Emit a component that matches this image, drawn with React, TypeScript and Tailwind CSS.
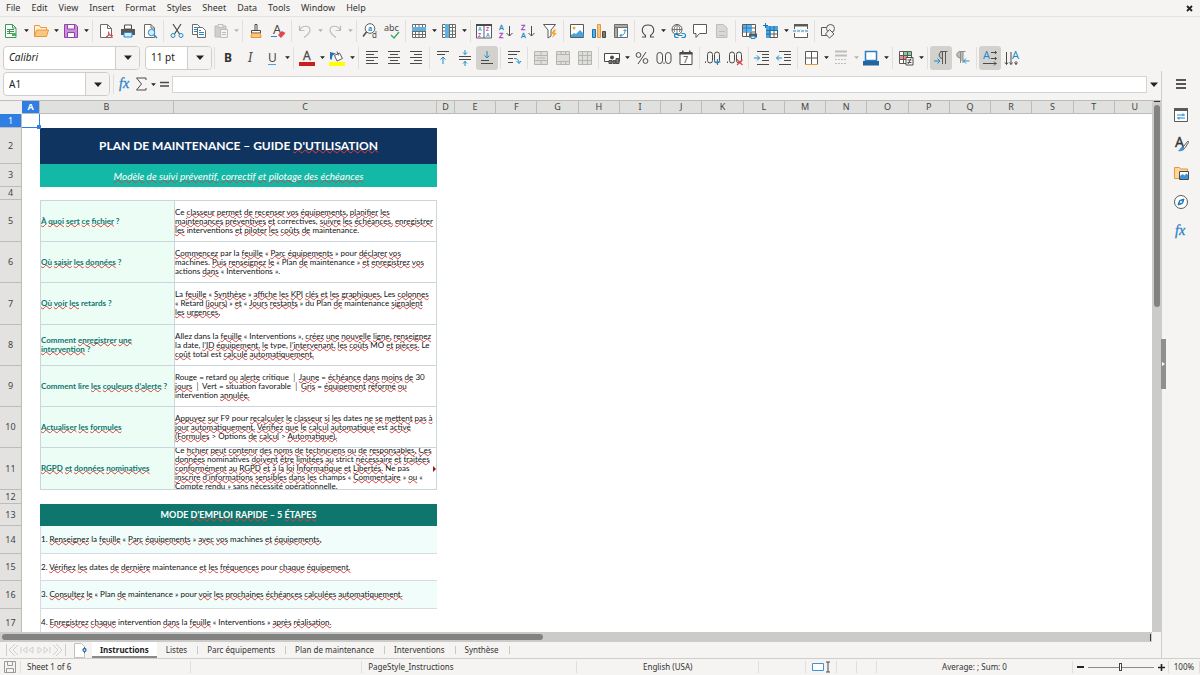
import React from 'react'

// ---------- icons (16x16) ----------

const INK = '#4a4a48'
const BLUE = '#1e8bcd'
const GREY = '#bdbdba'
const PURPLE = '#a13cc0'

const icons: Record<string, React.ReactNode> = {
  newDoc: (
    <>
      <path d="M2.5 1.5h7l3.5 3.5v9.500h-10.500z" fill="#fff" stroke="#3a9a55" />
      <path d="M9.500 1.500v3.500h3.500" fill="none" stroke="#3a9a55" />
      <path d="M4 6.500h7M4 8.500h7M4 10.500h7M6.500 6v5" stroke="#3a9a55" />
      <path d="M9 10h4v3h-4z" fill="#4caf63" />
    </>
  ),
  open: (
    <>
      <path d="M1.500 13.500v-11h5l1 2h6v3" fill="#fff3df" stroke="#e8973a" />
      <path d="M1.500 13.500l2-6.500h12l-2 6.500z" fill="#fbc77d" stroke="#e8973a" />
    </>
  ),
  save: (
    <>
      <path d="M1.500 1.500h11l2 2v11h-13z" fill="#c98fdc" stroke="#9440ab" />
      <path d="M4.500 1.500h7v4.500h-7z" fill="#fff" stroke="#9440ab" />
      <path d="M4.500 9.500h7v5h-7z" fill="#fff" stroke="#9440ab" />
    </>
  ),
  pdf: (
    <>
      <path d="M2.500 1.500h7l4 4v9h-11z" fill="#fff" stroke="#6b6b69" />
      <path d="M9.500 1.500v4h4" fill="none" stroke="#6b6b69" />
      <path d="M8 15c2-1 3-4 2.500-6.500M8 14c2-2 5-2.500 7-1.500M10.500 9c.5 2.500 2.500 4.500 4.500 5.500" fill="none" stroke="#e0434b" />
    </>
  ),
  print: (
    <>
      <path d="M4.500 2h7v4h-7z" fill="#fff" stroke={INK} />
      <path d="M1 6h14v6h-14z" fill="#54585c" />
      <path d="M4 9.500h8v4.500h-8z" fill="#d7ecfa" stroke={BLUE} />
    </>
  ),
  preview: (
    <>
      <path d="M2.500 1.500h6.500l3.500 3.500v9.500h-10z" fill="#fff" stroke="#6b6b69" />
      <path d="M9 1.500v3.500h3.500" fill="none" stroke="#6b6b69" />
      <circle cx="9.500" cy="9.500" r="3.200" fill="#d7ecfa" stroke={BLUE} />
      <path d="M12 12l3 3" stroke={BLUE} strokeWidth="1.500" />
    </>
  ),
  cut: (
    <>
      <path d="M4 1l6.500 10M12 1L5.500 11" stroke={INK} strokeWidth="1.200" />
      <circle cx="4" cy="12.500" r="2" fill="none" stroke={BLUE} />
      <circle cx="12" cy="12.500" r="2" fill="none" stroke={BLUE} />
    </>
  ),
  copy: (
    <>
      <path d="M1.500 1.500h5l2 2v8h-7z" fill="#fff" stroke="#6b6b69" />
      <path d="M3 4.500h3M3 6.500h3M3 8.500h3" stroke={BLUE} />
      <path d="M6.500 4.500h5l3 3v7h-8z" fill="#fff" stroke="#6b6b69" />
      <path d="M8 9.500h5M8 11.500h5M8 7.500h2" stroke={BLUE} />
    </>
  ),
  paste: (
    <>
      <path d="M2 3h11v11h-11z" fill="#cfcfcc" stroke={GREY} />
      <path d="M5 1.500h5v3h-5z" fill="#eee" stroke={GREY} />
      <path d="M7.500 6.500h7v8h-7z" fill="#f3f3f1" stroke={GREY} />
      <path d="M9 9.500h4M9 11.500h4" stroke={GREY} />
    </>
  ),
  brush: (
    <>
      <path d="M7 1.500h2v6h-2z" fill="#fff" stroke={INK} />
      <path d="M3.500 7.500h9v2.500h-9z" fill="#fff" stroke={INK} />
      <path d="M3.500 10.500h9l.5 4h-10z" fill="#fbc77d" stroke="#e8973a" />
    </>
  ),
  clear: (
    <>
      <text x="3" y="11" fontSize="13" fill={INK}>A</text>
      <path d="M1 13.500h6" stroke={BLUE} />
      <path d="M8 12l4-4 3.500 2-4.500 5z" fill="#e54550" />
    </>
  ),
  undo: <path d="M2.500 2.500v5h5M3 7c2-5 10-5 10 0 0 3.500-3 5-6 7.500" fill="none" stroke={GREY} strokeWidth="1.200" />,
  redo: <path d="M13.500 2.500v5h-5M13 7c-2-5-10-5-10 0 0 3.500 3 5 6 7.500" fill="none" stroke={GREY} strokeWidth="1.200" />,
  find: (
    <>
      <circle cx="8" cy="5.500" r="4.800" fill="#fff" stroke="#5a5a58" />
      <path d="M4.500 9L1 13.500" stroke={INK} strokeWidth="1.500" />
      <text x="6" y="8" fontSize="7" fontWeight="bold" fill={BLUE}>a</text>
      <text x="10" y="15" fontSize="8" fill={INK}>d</text>
    </>
  ),
  spell: (
    <>
      <text x="0" y="8" fontSize="9" fill={INK}>abc</text>
      <path d="M7 12l3 3 5-6" fill="none" stroke="#35a860" strokeWidth="1.300" />
    </>
  ),
  rows: (
    <>
      <path d="M1.500 1.500h13v13h-13zM1.500 8.500h13M1.500 11.500h13M4.500 1.500v13M8 1.500v13M11.500 1.500v13" fill="#fff" stroke="#6b6b69" />
      <path d="M1 4h14v4h-14z" fill="#5fb0e5" />
    </>
  ),
  cols: (
    <>
      <path d="M1.500 1.500h13v13h-13zM1.500 4.500h13M1.500 8h13M1.500 11.500h13M8.500 1.500v13M11.500 1.500v13" fill="#fff" stroke="#6b6b69" />
      <path d="M4 1h4v14h-4z" fill="#5fb0e5" />
    </>
  ),
  sort: (
    <>
      <path d="M.5 1.500h15v13.500h-15zM8 1v14" fill="#fff" stroke="#5a5a58" />
      <path d="M0 1h16v2h-16z" fill="#4a4a48" />
      <g fontSize="5" fontWeight="bold" fontFamily="Liberation Sans, sans-serif">
        <text x="2" y="8" fill={BLUE}>A</text>
        <text x="2" y="14" fill={PURPLE}>Z</text>
        <text x="10" y="8" fill={PURPLE}>Z</text>
        <text x="10" y="14" fill={BLUE}>A</text>
      </g>
    </>
  ),
  sortAsc: (
    <>
      <g fontSize="7" fontFamily="Liberation Sans, sans-serif">
        <text x="1" y="7" fill={BLUE} stroke={BLUE} strokeWidth=".3">A</text>
        <text x="1" y="15" fill={PURPLE} stroke={PURPLE} strokeWidth=".3">Z</text>
      </g>
      <path d="M11.500 3v10M8.500 10l3 3 3-3" fill="none" stroke={INK} />
    </>
  ),
  sortDesc: (
    <>
      <g fontSize="7" fontFamily="Liberation Sans, sans-serif">
        <text x="1" y="7" fill={PURPLE} stroke={PURPLE} strokeWidth=".3">Z</text>
        <text x="1" y="15" fill={BLUE} stroke={BLUE} strokeWidth=".3">A</text>
      </g>
      <path d="M11.500 3v10M8.500 10l3 3 3-3" fill="none" stroke={INK} />
    </>
  ),
  filter: (
    <>
      <path d="M1.500 1.500h12l-4.500 5.500v6l-3 2v-8z" fill="#fff" stroke="#5a5a58" />
      <path d="M12 6.500l-3 4.500h2.500l-1.500 4 5-5h-2.500l1.500-3.500z" fill="#f7a733" />
    </>
  ),
  image: (
    <>
      <path d="M1.500 1.500h13v13h-13z" fill="#fff" stroke="#5a5a58" />
      <circle cx="5" cy="5" r="1.500" fill="#f7a733" />
      <path d="M2 14v-2l3-2 2 1 4-4 3.500 3.500v3.500z" fill="#4aa3dd" />
    </>
  ),
  chart: (
    <>
      <path d="M1.500 6.500h3v8h-3z" fill="#5fb0e5" stroke="#1873b0" />
      <path d="M6.500 1.500h3v13h-3z" fill="#fbc77d" stroke="#e8973a" />
      <path d="M11.500 8.500h3v6h-3z" fill="#77797c" stroke="#4b4b49" />
    </>
  ),
  pivot: (
    <>
      <path d="M1.500 1.500h13v13h-13zM1.500 4.500h13M4.500 1.500v13" fill="#fff" stroke="#6b6b69" />
      <path d="M2 2h12v2h-12zM2 5h2v9h-2z" fill="#aaa" />
      <path d="M7 12.500c4 0 5-2 5-5.500M10.500 8l1.500-1.500 1.500 1.500M8.500 11l-1.500 1.500 1.500 1.500" fill="none" stroke={BLUE} />
    </>
  ),
  omega: <path d="M2 14h3.500v-1.500C.5 9 1.500 2 8 2s7.500 7 2.500 10.500v1.500h3.500" fill="none" stroke={INK} strokeWidth="1.100" />,
  link: (
    <>
      <circle cx="7" cy="6.500" r="5" fill="#fff" stroke="#5a5a58" />
      <path d="M2 6.500h10M7 1.500v10M4.500 9c-1-3 0-6 2.500-7.500 2.500 1.500 3.500 4.500 2.500 7.500" fill="none" stroke="#5a5a58" strokeWidth=".8" />
      <path d="M8.500 10.500h-2a2 2 0 000 4h2M11.500 10.500h2a2 2 0 010 4h-2M7.500 12.500h5" fill="none" stroke={BLUE} strokeWidth="1.200" />
    </>
  ),
  comment: <path d="M1.500 1.500h13v9h-7l-3.500 4v-4h-2.500z" fill="#fff" stroke="#5a5a58" />,
  headers: (
    <>
      <path d="M2.500 1.500h7l3.500 3.500v9.500h-10.500z" fill="#d8d8d5" stroke={GREY} />
      <path d="M5 8.500h6M5 12.500h6" stroke="#bbb" />
    </>
  ),
  printArea: (
    <>
      <path d="M1.500 1.500h13v12h-13zM1.500 5h13M1.500 9h13M5.500 1.500v12M10 1.500v12" fill="#fff" stroke="#5a5a58" />
      <path d="M2 2h9v7h-9z" fill="#5fb0e5" />
      <path d="M2 5h9M5.500 2v7" stroke="#2b7fc0" />
      <path d="M8 10.500h8v4h-8z" fill="#54585c" />
      <path d="M10 13h4v2.500h-4z" fill="#d7ecfa" stroke={BLUE} />
    </>
  ),
  freeze: (
    <>
      <path d="M3.500 3.500h11v11h-11zM3.500 7.500h11M3.500 11h11M7 3.500v11M11 3.500v11" fill="#fff" stroke="#5a5a58" />
      <path d="M3 3h12v4h-12zM3 3h4v12h-4z" fill="#4aa3dd" />
      <path d="M3 7.500h12M3 11h4M7 3v12M11 3v4" stroke="#1873b0" />
      <path d="M2.500 0v5M0 2.500h5" stroke="#1873b0" />
    </>
  ),
  split: (
    <>
      <path d="M1.500 6v-4.500h13v4.500M1.500 10v4.500h13v-4.500" fill="#fff" stroke="#5a5a58" />
      <path d="M1 1h14v2.500h-14z" fill="#5a5a58" />
      <path d="M0 8h16" stroke={BLUE} strokeDasharray="3 1" />
    </>
  ),
  shapes: (
    <>
      <path d="M1.500 4.500h7v8h-7z" fill="#f5f4f2" stroke="#5a5a58" />
      <circle cx="10.500" cy="5.500" r="4" fill="#f5f4f2" stroke="#5a5a58" />
      <path d="M9.500 6.500l4.500 4.500-4.500 4-4-4z" fill="#f5f4f2" stroke="#5a5a58" />
    </>
  ),
  bold: <text x="4" y="12" fontSize="12" fontWeight="bold" fill="#333">B</text>,
  italic: <text x="6" y="12" fontSize="12" fontStyle="italic" fontFamily="DejaVu Serif, serif" fill={INK}>I</text>,
  underline: (
    <>
      <text x="4" y="12" fontSize="12" fill={INK}>U</text>
      <path d="M4 14.500h8" stroke="#4aa3dd" />
    </>
  ),
  fontColor: (
    <>
      <text x="4" y="10" fontSize="12" fill={INK} stroke={INK} strokeWidth=".3">A</text>
      <path d="M0 12h16v4h-16z" fill="#c8201f" />
    </>
  ),
  fillColor: (
    <>
      <path d="M5.500 5.500l5-2.500 3 5.500-5.500 2.500zM8 1.500l1.500 4" fill="#fff" stroke="#5a5a58" />
      <path d="M1 2l6 1.500-3.500 2-1 4.500-1.500-1z" fill="#2272b4" />
      <path d="M0 12h16v4h-16z" fill="#ff0" />
    </>
  ),
  alignLeft: <path d="M2 1.500h12M2 4.500h8M2 7.500h12M2 10.500h8M2 13.500h12" stroke={INK} />,
  alignCenter: <path d="M2 1.500h12M4 4.500h8M2 7.500h12M4 10.500h8M2 13.500h12" stroke={INK} />,
  alignRight: <path d="M2 1.500h12M6 4.500h8M2 7.500h12M6 10.500h8M2 13.500h12" stroke={INK} />,
  alignTop: (
    <>
      <path d="M2 1.500h12M2 4.500h8" stroke={INK} />
      <path d="M8 14v-7M5.500 9.500L8 7l2.500 2.500" fill="none" stroke={BLUE} />
    </>
  ),
  alignMiddle: (
    <>
      <path d="M2 6.500h12M2 9.500h12" stroke={INK} />
      <path d="M8 0v4.500M6 2.500l2 2 2-2M8 16v-5M6 13.500l2-2 2 2" fill="none" stroke={BLUE} />
    </>
  ),
  alignBottom: (
    <>
      <path d="M2 10.500h8M2 13.500h12" stroke={INK} />
      <path d="M8 1v7M5.500 5.500L8 8l2.500-2.500" fill="none" stroke={BLUE} />
    </>
  ),
  wrap: (
    <>
      <path d="M2 1.500h12M2 4.500h9M2 8.500h5M2 12.500h5" stroke={INK} />
      <path d="M8 8.500c3 0 5 1 5 4.500M10.500 11l2.500 2.500 2-2.500" fill="none" stroke={BLUE} />
    </>
  ),
  merge: <path d="M1.500 1.500h13v13h-13zM1.500 5.500h13M1.500 10.500h13M8 1.500v4M8 10.500v4M4 8h8" fill="#dededb" stroke="#b4b4b1" />,
  mergeCells: <path d="M1.500 1.500h13v13h-13zM1.500 4.500h13M1.500 11.500h13M6 1.500v3M10.500 1.500v3M6 11.500v3M10.500 11.500v3" fill="#dededb" stroke="#b4b4b1" />,
  unmerge: <path d="M1.500 1.500h13v13h-13zM1.500 5.500h13M1.500 10.500h13M5.500 1.500v13M10.500 1.500v13" fill="#dededb" stroke="#b4b4b1" />,
  currency: (
    <>
      <path d="M.5 3.500h15v8h-15z" fill="#fff" stroke={INK} />
      <circle cx="8" cy="7.500" r="2" fill={INK} />
      <path d="M5 13.500h3v-3h-3zM9 13.500h2.500v-3h-2.500zM12 13.500h3v-5h-3z" fill="#77797c" stroke={INK} />
    </>
  ),
  percent: (
    <>
      <circle cx="4.500" cy="5" r="2.400" fill="none" stroke={INK} />
      <circle cx="11.500" cy="11" r="2.400" fill="none" stroke={INK} />
      <path d="M12 2L4 14" stroke={INK} />
    </>
  ),
  number: (
    <>
      <rect x="1" y="2.500" width="5.500" height="11" rx="2.700" fill="none" stroke={INK} />
      <rect x="9.500" y="2.500" width="5.500" height="11" rx="2.700" fill="none" stroke={INK} />
      <path d="M7.500 12.500h1v1.500h-1z" fill={INK} />
    </>
  ),
  date: (
    <>
      <path d="M2 3h12v11.500h-12z" fill="#fff" stroke={INK} />
      <path d="M1.500 2h13v2.500h-13zM4 .5h1.500v2h-1.500zM11 .5h1.500v2h-1.500z" fill={INK} />
      <text x="5" y="13" fontSize="9" fill={INK}>7</text>
    </>
  ),
  addDecimal: (
    <>
      <path d="M0 11.500h1v1.500h-1z" fill={INK} />
      <rect x="2.500" y="2" width="5" height="11" rx="2.500" fill="none" stroke={INK} />
      <rect x="9.500" y="2" width="5" height="11" rx="2.500" fill="none" stroke={INK} />
      <path d="M12.500 9v6M9.500 12h6" stroke={BLUE} strokeWidth="1.200" />
    </>
  ),
  delDecimal: (
    <>
      <path d="M0 11.500h1v1.500h-1z" fill={INK} />
      <rect x="2.500" y="2" width="5" height="11" rx="2.500" fill="none" stroke={INK} />
      <rect x="9.500" y="2" width="5" height="11" rx="2.500" fill="none" stroke={INK} />
      <path d="M10 9.500l5.500 5.500M15.500 9.500L10 15" stroke="#e0434b" strokeWidth="1.200" />
    </>
  ),
  indent: (
    <>
      <path d="M3 1.500h12M8 4.500h7M8 7.500h7M8 10.500h7M3 14.500h12" stroke={INK} />
      <path d="M0 8h5.500M3 5.500L5.500 8 3 10.500" fill="none" stroke={BLUE} />
    </>
  ),
  outdent: (
    <>
      <path d="M3 1.500h12M8 4.500h7M8 7.500h7M8 10.500h7M3 14.500h12" stroke={INK} />
      <path d="M.5 8h5.500M3 5.500L.5 8 3 10.500" fill="none" stroke={BLUE} />
    </>
  ),
  borders: (
    <>
      <path d="M2.500 14.500v-13h12v13M8.500 1.500v13M2.500 8h12" fill="#fff" stroke="#5a5a58" />
      <path d="M2 14.500h13" stroke="#e8973a" />
    </>
  ),
  borderStyle: (
    <>
      <path d="M2 1.500h12M2 5.500h12" stroke={GREY} strokeWidth="2" />
      <path d="M2 9.500h12M2 13.500h12" stroke={GREY} strokeDasharray="2 1" />
    </>
  ),
  borderColor: (
    <>
      <path d="M2.500 1.500h11v9h-11z" fill="#fff" stroke="#2b7fc0" strokeWidth="1.500" />
      <path d="M0 11h16v4.500h-16z" fill="#24659f" />
    </>
  ),
  conditional: (
    <>
      <path d="M1.500 1.500h12v12h-12z" fill="#fff" stroke="#5a5a58" />
      <path d="M6 2h7v3h-7z" fill="#7fcf95" />
      <path d="M2 6h7v3h-7z" fill="#ee8b8f" />
      <path d="M1.500 5.500h12M1.500 9.500h12M5.500 1.500v12M9.500 1.500v12" stroke="#5a5a58" />
      <path d="M8 7.500h7v7.500h-7z" fill="#fff" stroke={INK} />
      <path d="M9.500 10h4M9.500 12.500h4M13 8.500l-3 5.500" stroke={INK} />
    </>
  ),
  ltr: (
    <>
      <path d="M9.500 8.500c-4.500 0-4.500-6.500 0-6.500z" fill="#bdbdba" />
      <path d="M9.500 14v-12M7.500 1.500h7M12.500 2v12M9.500 8.500c-4.500 0-4.500-7 0-7" fill="none" stroke="#5a5a58" />
      <path d="M1 11h6M4.500 8.500L7 11l-2.500 2.500" fill="none" stroke={BLUE} />
    </>
  ),
  rtl: (
    <>
      <path d="M5.500 8c-5 0-5-6 0-6h2.500v9h-2.500z" fill="#bdbdba" />
      <path d="M5.500 13v-11.500h5M8 2v11M5.500 8c-5 0-5-6.500 0-6.500" fill="none" stroke="#8b8b89" />
      <path d="M8.500 11h6M11 8.500L8.500 11l2.500 2.500" fill="none" stroke={BLUE} />
    </>
  ),
  textLtr: (
    <>
      <text x="1" y="9" fontSize="11" fill={BLUE}>A</text>
      <path d="M9 2.500h5.500M13 1l1.500 1.500L13 4M9 8.500h5.500M13 7l1.500 1.500L13 10M1 13.500h13.500M12 11.500l2 2-2 2" fill="none" stroke={INK} />
    </>
  ),
  textTtb: (
    <>
      <text x="8" y="9" fontSize="11" fill={BLUE}>A</text>
      <path d="M2.500 2v12.500M1 12.500l1.500 2 1.500-2M7 2v12.500M5.500 12.500l1.500 2 1.500-2M12 11v3.500M10.500 12.500l1.500 2 1.500-2" fill="none" stroke={INK} />
    </>
  ),
  fx: (
    <text x="2" y="12" fontSize="14" fontStyle="italic" fontFamily="Liberation Serif, serif" fill="#2b82c9" stroke="#2b82c9" strokeWidth=".3">
      fx
    </text>
  ),
  sigma: <path d="M13 4v-2h-9.500l5 6-5 6h9.500v-2" fill="none" stroke={INK} />,
  equals: <path d="M4 6.500h9M4 10h9" stroke={INK} strokeWidth="1.500" />,
  hamburger: <path d="M3 4h10M3 8h10M3 12h10" stroke="#222" strokeWidth="1.400" />,
  properties: (
    <>
      <path d="M1.500 1.500h13v13h-13z" fill="#fff" stroke="#5a5a58" />
      <path d="M1 1h14v3h-14z" fill="#5a5a58" />
      <path d="M4 8h8M4 11h8M10 6.500V9M6 10v2.500" stroke={BLUE} />
    </>
  ),
  styles: (
    <>
      <text x="2" y="11" fontSize="14" fill="#333" stroke="#333" strokeWidth=".3">A</text>
      <path d="M15 5l-5 6 1.500 1.500 4-6z" fill="#fff" stroke="#5a5a58" />
      <path d="M10 11c-2-1-2.500 2.500-5 4 3 .5 6 0 6.500-2.500z" fill="#3d93d3" />
    </>
  ),
  gallery: (
    <>
      <path d="M1.500 13.500v-11h5l1 1.500h7v9.500z" fill="#fbd7a0" stroke="#e8973a" />
      <path d="M6.500 6.500h9v8h-9z" fill="#fff" stroke="#4b4b49" />
      <path d="M7 14v-3l2.500-2 2 1.500 2-2 1.500 1.500v4z" fill="#3d93d3" />
    </>
  ),
  navigator: (
    <>
      <circle cx="8" cy="8" r="6.500" fill="#fff" stroke="#5a5a58" />
      <path d="M11 5l-1.500 4.500-4.500 1.500 1.500-4.500z" fill="#3d93d3" stroke="#1873b0" />
      <circle cx="8" cy="8" r="1" fill="#fff" />
    </>
  ),
  disk: <path d="M2.500 2.500h11v11h-11zM5.500 2.500v4h5v-4M4.500 13.500v-4h7v4" fill="none" stroke="#9a9a97" />,
  sheetAdd: (
    <>
      <path d="M1.500 1.500h7l3 3v11h-10z" fill="#fff" stroke="#c0c0bd" />
      <circle cx="11.500" cy="8" r="1.500" fill="#fff" stroke="#2b6cb0" strokeWidth="1.300" />
      <path d="M11.500 5v1M11.500 10v1" stroke="#2b6cb0" />
    </>
  ),
}

const Icon = ({ name }: { name: string }) => (
  <svg width="16" height="16" viewBox="0 0 16 16" aria-hidden="true" className="shrink-0 overflow-visible">
    {icons[name]}
  </svg>
)

const Caret = ({ big = false, dim = false }: { big?: boolean; dim?: boolean }) => (
  <svg width={big ? 8 : 5} height={big ? 5 : 3} viewBox="0 0 8 5" aria-hidden="true">
    <path d="M0 .5h8L4 5z" fill={dim ? '#b4b4b1' : '#222'} />
  </svg>
)

// ---------- toolbars ----------

// '|' is a separator; after the name 'v' adds a drop-down arrow, '!' marks a pressed button, '-' a disabled arrow
const standardBar =
  'newDoc:v open:v save:v | pdf print preview | cut copy paste:v- | brush clear | undo:v- redo:v- | find spell | rows:v cols:v | sort sortAsc sortDesc filter | image chart pivot | omega:v link comment headers | printArea freeze:v split | shapes'

const formattingBar =
  '| bold italic underline:v | fontColor:v fillColor:v | alignLeft alignCenter alignRight | alignTop alignMiddle alignBottom:! | wrap | merge mergeCells unmerge | currency:v percent number date | addDecimal delDecimal | indent outdent | borders:v borderStyle:v- borderColor:v | conditional:v | ltr:! rtl | textLtr:! textTtb'

const ToolButtons = ({ spec }: { spec: string }) => (
  <>
    {spec.split(' ').map((item, i) => {
      if (item === '|') return <span key={i} className="mx-[2px] h-[22px] w-px shrink-0 bg-[#e0dfdc]" />
      const [name, flags = ''] = item.split(':')
      return (
        <React.Fragment key={i}>
          <button
            aria-label={name}
            className={`flex h-[24px] w-[22px] shrink-0 items-center justify-center rounded-[3px] ${flags.includes('!') ? 'bg-[#d3d1cd]' : ''}`}
          >
            <Icon name={name} />
          </button>
          {flags.includes('v') && (
            <button aria-label={`${name} options`} className="flex h-[24px] w-[8px] shrink-0 items-center justify-center">
              <Caret dim={flags.includes('-')} />
            </button>
          )}
        </React.Fragment>
      )
    })}
  </>
)

type ComboProps = { label: string; value: string; className: string; italic?: boolean }

const Combo = ({ label, value, className, italic }: ComboProps) => (
  <div className={`flex h-[24px] shrink-0 overflow-hidden rounded-[4px] border border-[#cfcdc9] bg-white ${className}`}>
    <input
      aria-label={label}
      defaultValue={value}
      className={`w-0 min-w-0 flex-1 pl-[5px] text-[10px] text-[#222] outline-none ${italic ? 'italic' : ''}`}
    />
    <button aria-label={`${label} list`} className="flex w-[24px] items-center justify-center border-l border-[#cfcdc9] bg-[#f5f4f2]">
      <Caret big />
    </button>
  </div>
)

// ---------- sheet ----------

const columns = 'ABCDEFGHIJKLMNOPQRSTU'.split('')

type Row = {
  h: string
  kind?: 'title' | 'subtitle' | 'section' | 'qa' | 'step'
  tint?: boolean
  first?: boolean
  overflow?: boolean
  label?: string[]
  lines?: string[]
}

// a word that starts with ~ is unknown to the spell checker
const rows: Row[] = [
  { h: 'h-[14px]' },
  { h: 'h-[36px]', kind: 'title', lines: ["PLAN DE MAINTENANCE – GUIDE ~D'UTILISATION"] },
  { h: 'h-[23px]', kind: 'subtitle', lines: ['~Modèle ~de ~suivi ~préventif, ~correctif ~et ~pilotage ~des ~échéances'] },
  { h: 'h-[13px]' },
  {
    h: 'h-[42px]',
    kind: 'qa',
    first: true,
    label: ['~À ~quoi ~sert ~ce ~fichier ?'],
    lines: [
      'Ce ~classeur ~permet ~de ~recenser ~vos ~équipements, ~planifier ~les',
      '~maintenances ~préventives ~et correctives, ~suivre ~les ~échéances, ~enregistrer',
      '~les interventions ~et ~piloter ~les ~coûts ~de maintenance.',
    ],
  },
  {
    h: 'h-[41px]',
    kind: 'qa',
    label: ['~Où ~saisir ~les ~données ?'],
    lines: [
      '~Commencez par la ~feuille « ~Parc ~équipements » pour ~déclarer ~vos',
      'machines. ~Puis ~renseignez ~le « Plan ~de maintenance » ~et ~enregistrez ~vos',
      'actions ~dans « Interventions ».',
    ],
  },
  {
    h: 'h-[42px]',
    kind: 'qa',
    label: ['~Où ~voir ~les retards ?'],
    lines: [
      'La ~feuille « ~Synthèse » ~affiche ~les ~KPI ~clés ~et ~les ~graphiques. Les ~colonnes',
      '« Retard ~(jours) » ~et « ~Jours ~restants » du Plan ~de maintenance ~signalent',
      '~les ~urgences.',
    ],
  },
  {
    h: 'h-[41px]',
    kind: 'qa',
    label: ['Comment ~enregistrer ~une', '~intervention ?'],
    lines: [
      'Allez dans la ~feuille « Interventions », ~créez ~une ~nouvelle ~ligne, ~renseignez',
      'la date, ~l’ID ~équipement, ~le type, ~l’intervenant, ~les ~coûts MO ~et ~pièces. Le',
      '~coût total est ~calculé ~automatiquement.',
    ],
  },
  {
    h: 'h-[41px]',
    kind: 'qa',
    label: ['Comment lire ~les ~couleurs ~d’alerte ?'],
    lines: [
      'Rouge = retard ~ou ~alerte critique │ ~Jaune = ~échéance ~dans ~moins ~de 30',
      '~jours │ Vert = situation favorable │ ~Gris = ~équipement ~réformé ~ou',
      'intervention ~annulée.',
    ],
  },
  {
    h: 'h-[41px]',
    kind: 'qa',
    label: ['~Actualiser ~les ~formules'],
    lines: [
      '~Appuyez ~sur F9 pour ~recalculer ~le ~classeur ~si ~les dates ~ne ~se ~mettent ~pas ~à',
      '~jour ~automatiquement. ~Vérifiez ~que ~le ~calcul ~automatique est ~activé',
      '(~Formules > Options ~de ~calcul > ~Automatique).',
    ],
  },
  {
    h: 'h-[42px]',
    kind: 'qa',
    overflow: true,
    label: ['~RGPD ~et ~données ~nominatives'],
    lines: [
      'Ce ~fichier ~peut ~contenir ~des ~noms ~de ~techniciens ~ou ~de ~responsables. ~Ces',
      '~données nominatives ~doivent ~être ~limitées ~au strict ~nécessaire ~et ~traitées',
      '~conformément ~au ~RGPD ~et ~à ~la ~loi ~Informatique ~et ~Libertés. Ne pas',
      '~inscrire ~d’informations ~sensibles ~dans ~les champs « ~Commentaire » ~ou «',
      '~Compte ~rendu » ~sans ~nécessité ~opérationnelle.',
    ],
  },
  { h: 'h-[14px]' },
  { h: 'h-[22px]', kind: 'section', lines: ["MODE ~D'EMPLOI ~RAPIDE – 5 ~ÉTAPES"] },
  { h: 'h-[28px]', kind: 'step', tint: true, lines: ['1. ~Renseignez la ~feuille « ~Parc ~équipements » ~avec ~vos machines ~et ~équipements.'] },
  { h: 'h-[27px]', kind: 'step', lines: ['2. ~Vérifiez ~les dates ~de ~dernière maintenance ~et ~les ~fréquences pour ~chaque ~équipement.'] },
  { h: 'h-[28px]', kind: 'step', tint: true, lines: ['3. ~Consultez ~le « Plan ~de maintenance » pour ~voir ~les ~prochaines ~échéances ~calculées ~automatiquement.'] },
  { h: 'h-[28px]', kind: 'step', lines: ['4. ~Enregistrez ~chaque intervention ~dans la ~feuille « Interventions » ~après ~réalisation.'] },
]

const Checked = ({ lines = [] }: { lines?: string[] }) => (
  <div className="font-[Lato,sans-serif] whitespace-nowrap">
    {lines.map((line) => (
      <p key={line}>
        {line.split(' ').map((word, i) => (
          <React.Fragment key={i}>
            {i > 0 && ' '}
            {word.includes('~') ? (
              <span className="underline decoration-[#d8403c] decoration-wavy decoration-1 underline-offset-[-1px] [text-decoration-skip-ink:none]">
                {word.replace('~', '')}
              </span>
            ) : (
              word
            )}
          </React.Fragment>
        ))}
      </p>
    ))}
  </div>
)

const wideCell = {
  title: 'justify-center bg-[#0f3460] text-[12px] font-bold text-white',
  subtitle: 'justify-center bg-[#14b8a6] text-[10px] italic text-white',
  section: 'justify-center bg-[#0f766e] text-[9px] font-bold text-white',
  step: 'border-b border-l border-[#d5dbe0] text-[8px] leading-[9px] text-[#111]',
}

const SheetRow = ({ row, index }: { row: Row; index: number }) => (
  <tr>
    <th scope="row" className={`border-r border-b border-[#bcbcb9] p-0 font-normal ${index === 0 ? 'bg-[#2f7ee3] font-bold text-white' : 'bg-[#e3e2e0] text-[#444]'}`}>
      {index + 1}
    </th>
    <td className="p-0">
      {index === 0 ? (
        <div className="relative h-[14px] border-r border-b border-[#2f7ee3]">
          <span className="absolute -right-[2px] -bottom-[2px] size-[4px] bg-[#2f7ee3]" />
        </div>
      ) : (
        <div className={row.h} />
      )}
    </td>
    {row.kind === 'qa' ? (
      <>
        <td className="p-0">
          <div
            className={`flex items-center overflow-hidden border-b border-l border-[#cbd5dc] bg-[#ecfdf5] text-[8px] leading-[9px] font-bold text-[#0f766e] ${row.first ? 'border-t' : ''} ${row.h}`}
          >
            <Checked lines={row.label} />
          </div>
        </td>
        <td className="p-0">
          <div
            className={`relative flex items-center overflow-hidden border-x border-b border-[#cbd5dc] text-[8px] leading-[9px] text-[#111] ${row.first ? 'border-t' : ''} ${row.h}`}
          >
            <Checked lines={row.lines} />
            {row.overflow && <span className="absolute top-[18px] right-0 border-y-[3px] border-l-[3px] border-y-transparent border-l-[#8b1a1a]" />}
          </div>
        </td>
      </>
    ) : (
      <td colSpan={2} className="p-0">
        {row.kind && (
          <div className={`flex items-center overflow-hidden ${wideCell[row.kind]} ${row.tint ? 'bg-[#f0fdfa]' : ''} ${row.h}`}>
            <Checked lines={row.lines} />
          </div>
        )}
      </td>
    )}
    <td colSpan={18} className="p-0" />
  </tr>
)

const Sheet = () => (
  <div className="min-w-0 flex-1 overflow-hidden bg-white">
    <table className="w-[calc(100%+4px)] table-fixed border-separate border-spacing-0 text-[9px] leading-[12px]">
      <colgroup>
        <col className="w-[22px]" />
        <col className="w-[18px]" />
        <col className="w-[134px]" />
        <col className="w-[263px]" />
        <col className="w-[18px]" />
        {columns.slice(4).map((c) => (
          <col key={c} />
        ))}
      </colgroup>
      <thead>
        <tr>
          <td className="h-[14px] border-t border-[#bcbcb9] bg-[#f0efed] p-0" />
          {columns.map((c) => (
            <th
              key={c}
              scope="col"
              className={`border-t border-r border-b border-[#bcbcb9] p-0 ${c === 'A' ? 'bg-[#2f7ee3] font-bold text-white' : 'bg-[#e0e0de] font-normal text-[#444]'}`}
            >
              {c}
            </th>
          ))}
        </tr>
      </thead>
      <tbody>
        {rows.map((row, i) => (
          <SheetRow key={i} row={row} index={i} />
        ))}
      </tbody>
    </table>
  </div>
)

// ---------- page ----------

const menus = ['File', 'Edit', 'View', 'Insert', 'Format', 'Styles', 'Sheet', 'Data', 'Tools', 'Window', 'Help']
const tabs = ['Instructions', 'Listes', 'Parc équipements', 'Plan de maintenance', 'Interventions', 'Synthèse']
const panels = ['properties', 'styles', 'gallery', 'navigator', 'fx']

const App = () => {
  return (
    <div className="flex h-screen flex-col overflow-hidden bg-[#f5f4f2] font-['Noto_Sans',sans-serif] text-[9px] text-[#333]">
      <nav className="flex h-[17px] shrink-0 items-center gap-[11px] border-b border-[#e4e3e1] pr-[7px] pl-[6px]">
        {menus.map((m) => (
          <button key={m}>{m}</button>
        ))}
        <button aria-label="Close document" className="ml-auto">
          <svg width="7" height="7" viewBox="0 0 7 7">
            <path d="M1 1l5 5M6 1L1 6" stroke="#222" strokeWidth="1.800" />
          </svg>
        </button>
      </nav>

      <div className="flex h-[27px] shrink-0 items-center">
        <ToolButtons spec={standardBar} />
      </div>
      <div className="flex h-[27px] shrink-0 items-center pl-[3px]">
        <Combo label="Font name" value="Calibri" italic className="mr-[5px] w-[137px]" />
        <Combo label="Font size" value="11 pt" className="w-[67px]" />
        <ToolButtons spec={formattingBar} />
      </div>

      <div className="flex min-h-0 flex-1">
        <main className="flex min-w-0 flex-1 flex-col">
          <div className="flex h-[29px] shrink-0 items-center pb-[3px] pl-[3px]">
            <Combo label="Name box" value="A1" className="w-[107px]" />
            <span className="mx-[3px] h-[20px] w-px bg-[#e0dfdc]" />
            <button aria-label="Function wizard"><Icon name="fx" /></button>
            <button aria-label="Sum" className="flex items-center gap-[2px]">
              <Icon name="sigma" />
              <Caret />
            </button>
            <button aria-label="Formula"><Icon name="equals" /></button>
            <input aria-label="Input line" className="h-[17px] min-w-0 flex-1 border border-[#d5d4d1] bg-white px-1 outline-none" />
            <button aria-label="Expand formula bar" className="flex w-[14px] justify-center">
              <Caret big />
            </button>
          </div>

          <div className="flex min-h-0 flex-1">
            <Sheet />
            <div className="flex w-[9px] shrink-0 flex-col items-center border-t border-[#bcbcb9] bg-[#cbcbc9]">
              <span className="mb-[3px] h-px w-[6px] bg-[#333]" />
              <span className="h-[38%] w-[6px] rounded-full bg-[#828280]" />
            </div>
          </div>
          <div className="mr-[9px] flex h-[10px] shrink-0 items-center bg-[#cbcbc9] pl-[2px]">
            <span className="h-[6px] w-[47%] rounded-full bg-[#828280]" />
            <span className="mr-px ml-auto h-[7px] w-px bg-[#333]" />
          </div>

          <div className="flex h-[16px] shrink-0 items-center text-[8px]">
            <svg width="62" height="14" viewBox="0 0 62 14" className="mr-[6px] ml-[5px]" aria-hidden="true">
              <path
                d="M1.500 1v12M10 1L4 7l6 6M13 2L8 7l5 5M16 4v6M22 4l-4 3 4 3zM28 4l-4 3 4 3zM33 4l4 3-4 3zM39 4l4 3-4 3zM45 4v6M48 2l5 5-5 5M51 1l6 6-6 6M60.500 1v12"
                fill="none"
                stroke="#cfcfcc"
              />
            </svg>
            <button aria-label="Add sheet" className="mr-[3px]"><Icon name="sheetAdd" /></button>
            {tabs.map((t, i) => (
              <button
                key={t}
                className={
                  i === 0
                    ? 'h-full bg-white px-[8px] font-bold text-[#222] shadow-[inset_0_-2px_#8b8b89]'
                    : 'flex h-full items-center pl-[9px] after:ml-[10px] after:h-[8px] after:w-px after:bg-[#c8c8c5]'
                }
              >
                {t}
              </button>
            ))}
          </div>
        </main>

        <aside className="relative flex w-[39px] shrink-0 flex-col items-center gap-[13px] border-l border-[#cfcecb] pt-[5px]">
          <button aria-label="Sidebar settings" className="mb-[2px]"><Icon name="hamburger" /></button>
          {panels.map((p) => (
            <button key={p} aria-label={p}><Icon name={p} /></button>
          ))}
          <button
            aria-label="Hide sidebar"
            className="absolute top-[268px] -left-px flex h-[50px] w-[5px] items-center justify-center bg-[#8f908e]"
          >
            <span className="border-y-2 border-l-[3px] border-y-transparent border-l-white" />
          </button>
        </aside>
      </div>

      <footer className="flex h-[17px] shrink-0 items-center border-t border-[#cfcecb] text-[8px] *:flex *:h-[12px] *:items-center *:border-r *:border-[#e0dfdc]">
        <span className="w-[21px] justify-center"><Icon name="disk" /></span>
        <span className="flex-[164] pl-[6px]">Sheet 1 of 6</span>
        <span className="flex-[171]" />
        <span className="flex-[209] pl-[6px]">PageStyle_Instructions</span>
        <span className="flex-[182] justify-center">English (USA)</span>
        <span className="flex-[46]" />
        <span className="w-[31px] justify-center">
          <svg width="20" height="12" viewBox="0 0 20 12" aria-hidden="true">
            <path d="M1.500 2.500h11v7h-11z" fill="#fff" stroke="#3d93d3" />
            <path d="M15 1h4M15 11h4M17 1v10" stroke={INK} />
          </svg>
        </span>
        <span className="w-[20px]" />
        <span className="w-[20px]" />
        <span className="flex-[196] justify-center">Average: ; Sum: 0</span>
        <span className="w-[96px] justify-center gap-[4px]">
          <button aria-label="Zoom out" className="h-[2px] w-[7px] bg-[#222]" />
          <input
            type="range"
            aria-label="Zoom"
            className="h-[9px] w-[66px] appearance-none bg-[linear-gradient(#8b8b89,#8b8b89)] bg-[length:100%_1px] bg-center bg-no-repeat [&::-webkit-slider-thumb]:h-[8px] [&::-webkit-slider-thumb]:w-[3px] [&::-webkit-slider-thumb]:appearance-none [&::-webkit-slider-thumb]:border [&::-webkit-slider-thumb]:border-[#444] [&::-webkit-slider-thumb]:bg-white"
          />
          <button aria-label="Zoom in">
            <svg width="7" height="7" viewBox="0 0 7 7">
              <path d="M0 3.500h7M3.500 0v7" stroke="#222" strokeWidth="1.600" />
            </svg>
          </button>
        </span>
        <span className="w-[31px] justify-center border-r-0">100%</span>
      </footer>
    </div>
  )
}

export default App
